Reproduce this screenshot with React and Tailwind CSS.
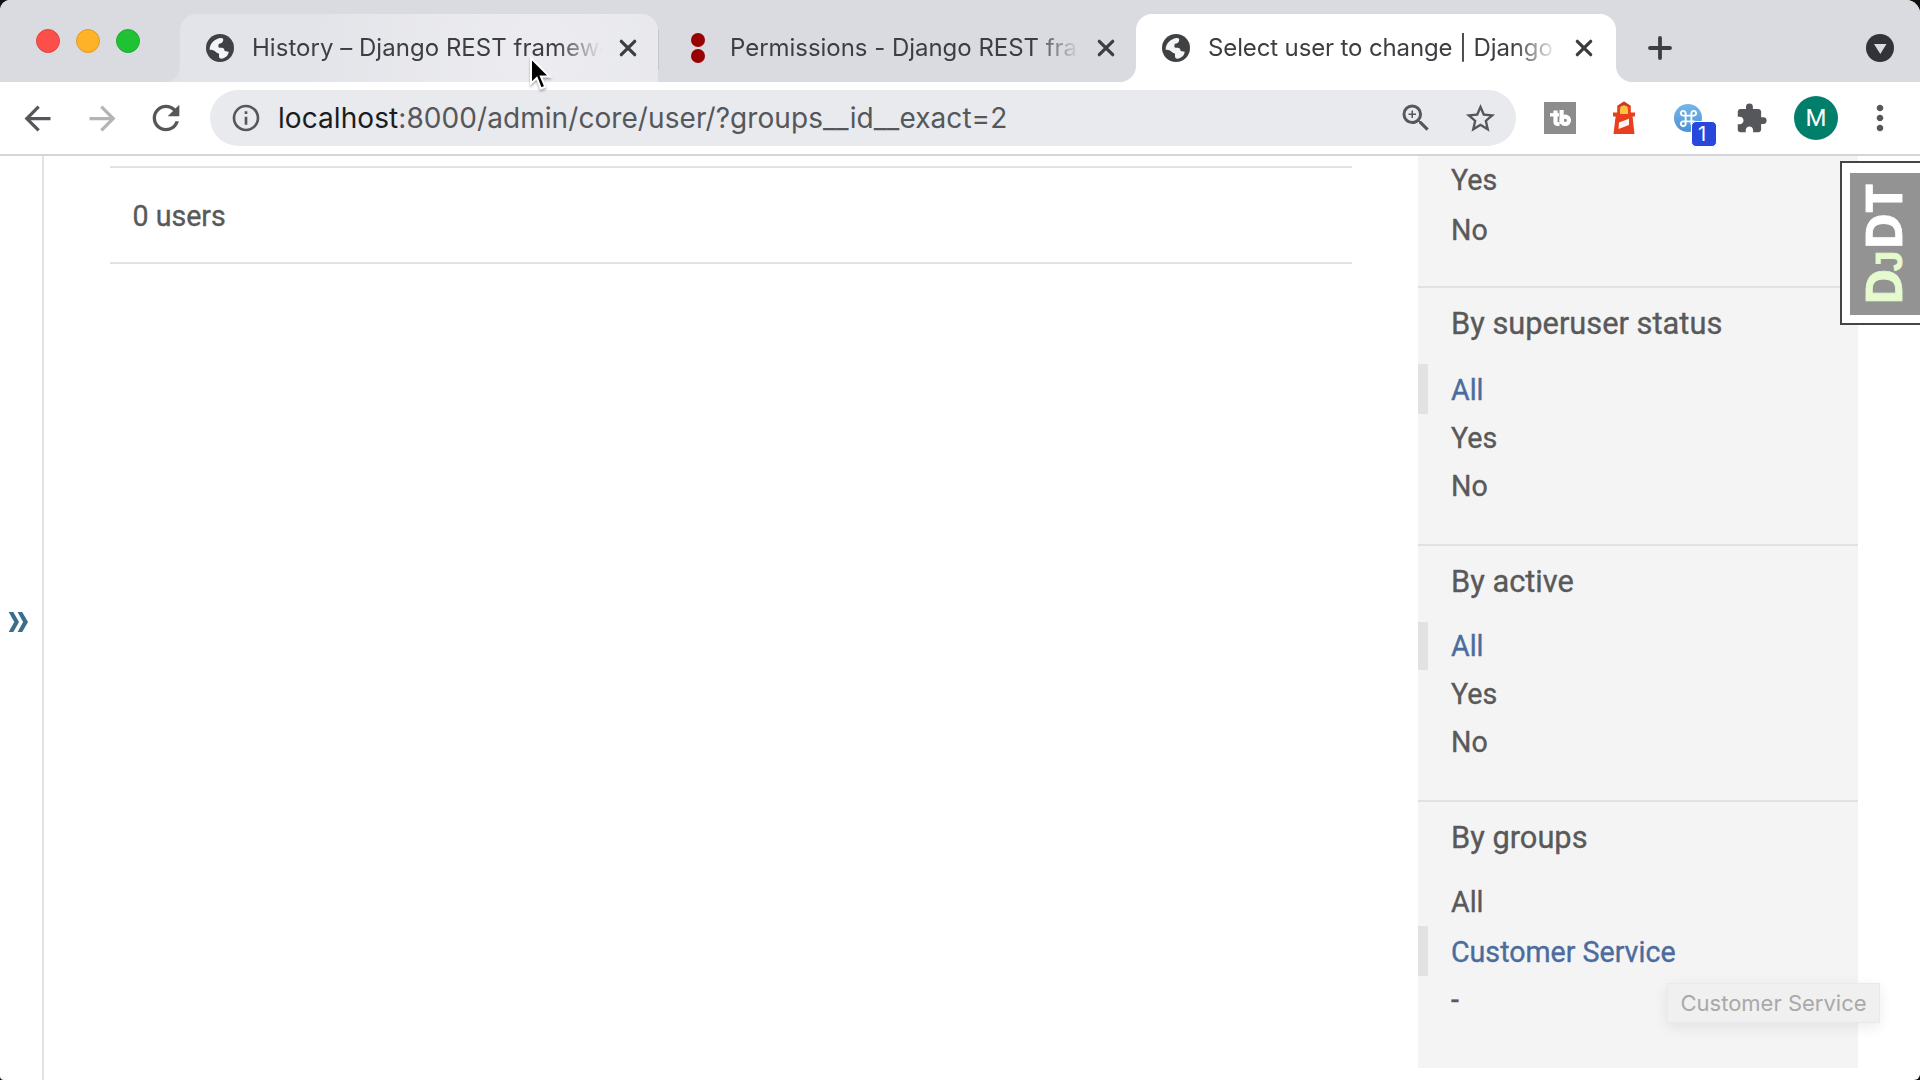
import {
  MdArrowBack,
  MdArrowForward,
  MdRefresh,
  MdInfoOutline,
  MdZoomIn,
  MdStarBorder,
  MdExtension,
  MdMoreVert,
  MdKeyboardCommandKey,
} from 'react-icons/md';

function Globe() {
  return (
    <svg viewBox="0 0 84 84" className="size-7 shrink-0">
      <circle cx="42" cy="42" r="42" fill="#3f4145" />
      <path
        d="M11 47C11 29 25 15 43 12C52 11 53 16 51 21C49 27 45 29 39 29C37 31 38 34 37 38C38 42 43 41 48 41C55 42 55 46 56 51L68 53C68 64 57 73 46 74C38 74 39 66 39 60C38 57 31 58 27 52C23 47 15 48 11 47Z"
        fill="#f4f4f6"
      />
    </svg>
  );
}

function RedDots() {
  return (
    <div className="flex w-7 shrink-0 flex-col items-center gap-0.5">
      <div className="size-3.5 rounded-full bg-[#990000]" />
      <div className="size-3.5 rounded-full bg-[#990000]" />
    </div>
  );
}

function Close() {
  return (
    <svg viewBox="0 0 18 18" className="size-[18px] shrink-0" stroke="#3b3d41" strokeWidth="3.2" strokeLinecap="round">
      <path d="M2.3 2.3 15.7 15.7M15.7 2.3 2.3 15.7" />
    </svg>
  );
}

function Tab({ icon, title, className, textClass }) {
  return (
    <div className={'relative flex h-[68px] items-center rounded-t-2xl pl-[26px] ' + className}>
      {icon}
      <div
        className={
          'ml-[18px] w-[351px] shrink-0 overflow-hidden whitespace-pre text-[24px] leading-[68px] text-[#3c3e42] [mask-image:linear-gradient(to_right,black_305px,transparent_350px)] ' +
          textClass
        }
      >
        {title}
      </div>
      <div className="ml-4">
        <Close />
      </div>
    </div>
  );
}

function Flare({ side, fill }) {
  return (
    <svg
      viewBox="0 0 16 16"
      className={'absolute bottom-0 size-4 ' + (side === 'left' ? '-left-4' : '-right-4')}
      fill={fill}
    >
      <path d={side === 'left' ? 'M16 0V16H0A16 16 0 0 0 16 0Z' : 'M0 0V16H16A16 16 0 0 1 0 0Z'} />
    </svg>
  );
}

function TabStrip() {
  return (
    <div className="flex h-[82px] bg-[#dadbe0] pt-3.5">
      <div className="flex w-[180px] gap-4 pl-9 pt-[15px]">
        <div className="size-6 rounded-full border border-[#de4640] bg-[#fd4f49]" />
        <div className="size-6 rounded-full border border-[#dd9c2c] bg-[#fdb227]" />
        <div className="size-6 rounded-full border border-[#22a932] bg-[#1fc234]" />
      </div>
      <div className="relative flex">
        <Tab
          icon={<Globe />}
          title="History – Django REST framewo"
          className="w-[478px] bg-[radial-gradient(circle_at_360px_44px,#ededf1_0px,#e3e4e9_230px)]"
          textClass="tracking-[0.03px]"
        />
        <Flare side="left" fill="#e1e2e7" />
      </div>
      <div className="relative flex">
        <Tab icon={<RedDots />} title="Permissions - Django REST fra" className="w-[478px]" textClass="tracking-[-0.03px]" />
        <div className="absolute left-0 top-4 h-10 w-px bg-[#c4c5ca]" />
      </div>
      <div className="relative flex">
        <Tab
          icon={<Globe />}
          title="Select user to change | Django "
          className="w-[480px] bg-white"
          textClass="tracking-[-0.13px]"
        />
        <Flare side="left" fill="#fff" />
        <Flare side="right" fill="#fff" />
      </div>
      <div className="flex grow items-center justify-between pl-8 pr-[26px]">
        <svg viewBox="0 0 24 24" className="size-6" stroke="#3b3d41" strokeWidth="3.8" strokeLinecap="round">
          <path d="M12 2V22M2 12H22" />
        </svg>
        <svg viewBox="0 0 28 28" className="size-7">
          <circle cx="14" cy="14" r="14" fill="#323338" />
          <path d="M8 10H20.5L14.3 20Z" fill="#dadbe0" />
        </svg>
      </div>
    </div>
  );
}

function Slot({ children }) {
  return <div className="flex w-16 shrink-0 items-center justify-center">{children}</div>;
}

function Toolbar() {
  return (
    <div className="flex h-[74px] border-b-2 border-[#d5d5d7] bg-white pl-1.5 text-[#55575b]">
      <Slot>
        <MdArrowBack size={39} className="mr-0.5" />
      </Slot>
      <Slot>
        <MdArrowForward size={39} className="text-[#b3b4b6]" />
      </Slot>
      <Slot>
        <MdRefresh size={40} />
      </Slot>
      <div className="ml-3 mr-3 flex h-14 w-[1306px] items-center self-center rounded-full bg-[#e9eaed] pl-5">
        <MdInfoOutline size={32} />
        <div className="ml-4 grow whitespace-nowrap text-[28px] tracking-[0.07px]">
          <span className="text-[#1b1c1f]">localhost</span>
          <span>:8000/admin/core/user/?groups__id__exact=2</span>
        </div>
        <MdZoomIn size={36} className="mr-[29px]" />
        <MdStarBorder size={35} className="mr-[18px]" />
      </div>
      <Slot>
        <svg viewBox="0 0 32 32" className="size-8">
          <rect width="32" height="32" fill="#8c8c8c" />
          <g fill="none" stroke="#fff" strokeWidth="4.2">
            <path d="M6 12.8H15" strokeWidth="3.4" />
            <path d="M11.5 8.5V20Q11.5 22 14 22H15.5" />
            <path d="M17.6 8V22" />
            <circle cx="21.3" cy="18.3" r="3.7" />
          </g>
        </svg>
      </Slot>
      <Slot>
        <svg viewBox="0 0 24 34" className="h-[34px] w-6">
          <path d="M12 .5 18.8 5V11.5H23V15.5H20.6L22.5 33H1.5L3.6 15.5H1V11.5H5.2V5Z" fill="#e8401f" />
          <path d="M5.2 5 12 .5 18.8 5Z" fill="#c5402b" />
          <path d="M8 13V8.5A4 4 0 0 1 16 8.5V13Z" fill="#fcc13f" />
          <path d="M7 21.5 17 17.8V24L6.5 28Z" fill="#fdf3f0" />
        </svg>
      </Slot>
      <Slot>
        <div className="relative flex size-7 items-center justify-center rounded-full bg-linear-to-b from-[#78b6ea] to-[#4a93d8] text-white">
          <MdKeyboardCommandKey size={23} />
          <div className="absolute left-[17px] top-[17px] flex size-[26px] items-center justify-center rounded-[5px] border border-white bg-[#2748dc] pr-1 text-[20px] leading-none">
            1
          </div>
        </div>
      </Slot>
      <Slot>
        <MdExtension size={33} className="mr-0.5" />
      </Slot>
      <Slot>
        <div className="flex size-11 items-center justify-center rounded-full bg-[#017f6b] font-[Roboto,sans-serif] text-[24px] text-white">
          M
        </div>
      </Slot>
      <Slot>
        <MdMoreVert size={40} />
      </Slot>
    </div>
  );
}

function Choice({ label, selected, className = 'h-12' }) {
  return (
    <li className={'flex ' + className + (selected ? ' text-[#4b6c9c]' : '')}>
      <span className={'w-2.5 shrink-0 ' + (selected ? 'bg-[#e2e2e2]' : '')} />
      <span className="ml-[23px] text-[28.6px] leading-[48px]">{label}</span>
    </li>
  );
}

function TallChoice({ label }) {
  return (
    <li className="flex h-[50px] text-[#4b6c9c]">
      <span className="w-2.5 shrink-0 bg-[#e2e2e2]" />
      <span className="ml-[23px] text-[28.6px] leading-[52px]">{label}</span>
    </li>
  );
}

function Section({ title, children, className = 'pb-[34px]' }) {
  return (
    <section className={'border-t-2 border-[#e2e2e2] ' + className}>
      <h3 className="mb-1 h-[72px] pl-[33px] text-[30.8px] leading-[72px]">{title}</h3>
      <ul>{children}</ul>
    </section>
  );
}

function FilterPanel() {
  return (
    <aside className="h-[912px] w-[440px] bg-[#f4f4f4] text-[#595959]">
      <ul className="h-[130px]">
        <Choice label="Yes" className="h-[50px]" />
        <Choice label="No" />
      </ul>
      <Section title="By superuser status">
        <TallChoice label="All" />
        <Choice label="Yes" />
        <Choice label="No" />
      </Section>
      <Section title="By active">
        <Choice label="All" selected />
        <Choice label="Yes" />
        <Choice label="No" />
      </Section>
      <Section title="By groups" className="">
        <Choice label="All" />
        <TallChoice label="Customer Service" />
        <Choice label="-" />
      </Section>
    </aside>
  );
}

function DebugToolbarHandle() {
  return (
    <div className="absolute right-0 top-[161px] h-[164px] w-20 border-2 border-r-0 border-[#454545] bg-white pb-2 pl-2 pt-2.5">
      <div className="flex h-full w-[70px] items-center justify-center bg-[#939393]">
        <div className="ml-1 shrink-0 -rotate-90 whitespace-nowrap font-['Open_Sans',sans-serif] text-[50px] font-bold leading-[70px] text-white [-webkit-text-stroke:0.8px_currentColor]">
          <span className="text-[#e5fbcf]">
            D<span className="-ml-[3px] mr-px font-['Liberation_Sans',sans-serif] text-[37px]">J</span>
          </span>
          DT
        </div>
      </div>
    </div>
  );
}

function Pointer() {
  return (
    <svg viewBox="0 0 24 36" className="absolute left-[529px] top-[56px] h-9 w-6 drop-shadow-[0_2px_1px_rgba(0,0,0,0.3)]">
      <path
        d="M2 2V27.5L7.8 22 11.9 32.5 16.2 30.7 11.9 20.5H20.5Z"
        fill="#000"
        stroke="#fff"
        strokeWidth="2"
        strokeLinejoin="miter"
      />
    </svg>
  );
}

export default function App() {
  return (
    <div className="h-[1080px] w-[1920px] overflow-hidden bg-[#111]">
      <div className="relative h-full overflow-hidden rounded-bl-[4px] rounded-br-[6px] rounded-tl-[10px] rounded-tr-[14px] bg-white font-[Inter,sans-serif]">
        <TabStrip />
        <Toolbar />
        <main className="flex h-[924px] font-[Roboto,sans-serif] text-[#595959] [-webkit-text-stroke:0.35px_currentColor]">
          <div className="flex w-11 items-center border-r-2 border-[#e2e2e2] pl-2 pt-2">
            <svg viewBox="0 0 22 22" className="size-[22px]" fill="#3b6e8b">
              <path d="M.7 1H5.3L11 11 5.3 21H.7L6.3 11Z" />
              <path d="M9.6 1H14.2L20 11 14.2 21H9.6L15.1 11Z" />
            </svg>
          </div>
          <div className="ml-[66px] mt-2.5 h-[98px] w-[1242px] border-y-2 border-[#e2e2e2] pl-[22.5px] text-[28.6px] leading-[96px]">
            0 users
          </div>
          <div className="ml-[66px]">
            <FilterPanel />
          </div>
        </main>
        <DebugToolbarHandle />
        <div className="absolute left-[1667px] top-[983px] h-10 w-[213px] border border-[#e9e9e9] bg-[#f0f0f0] text-center text-[22px] leading-[38px] text-[#a9a9a9] shadow-[0_4px_14px_rgba(0,0,0,0.08)]">
          Customer Service
        </div>
        <Pointer />
      </div>
    </div>
  );
}
